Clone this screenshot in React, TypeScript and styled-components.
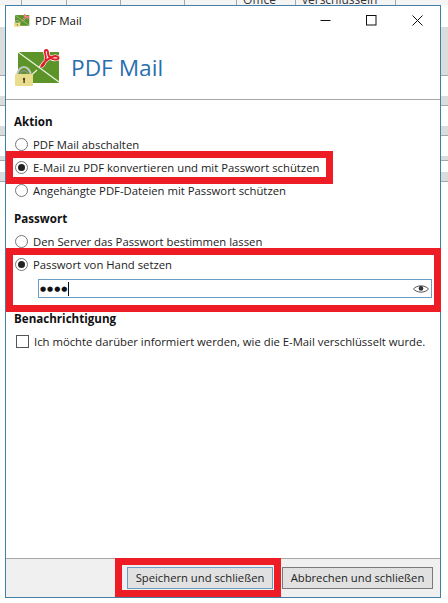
import styled, { createGlobalStyle } from 'styled-components'

const GlobalStyle = createGlobalStyle`
  html, body {
    margin: 0;
    padding: 0;
    background: #fff;
  }
  body {
    font-family: 'Open Sans', 'Liberation Sans', sans-serif;
    color: #222;
  }
`

const bands = [
  { height: 22, shaded: false },
  { height: 49, shaded: true },
  { height: 20, shaded: false },
  { height: 10, shaded: true },
  { height: 20, shaded: false },
  { height: 10, shaded: true },
  { height: 20, shaded: false },
  { height: 5, shaded: true },
  { height: 11, shaded: false },
  { height: 10, shaded: true },
]

const columns = [
  { width: 22 },
  { width: 45 },
  { width: 54 },
  { width: 64 },
  { width: 52 },
  { width: 59, text: 'Office' },
  { width: 100, text: 'verschlüsseln' },
]

function AppIcon({ size }: { size: number }): JSX.Element {
  return (
    <svg width={size} height={(size * 38) / 46} viewBox="0 0 46 38">
      <rect x="3" y="3" width="41" height="31" fill="#5c9429" />
      <path d="M3 3 L44 33 M24 18 L32 11 M8 34 L22 21" stroke="#eef4e0" strokeWidth="1.2" fill="none" />
      <path
        d="M26 18 C30 16 32 9 30 4 C29 0 33 0 33 4 C33 8 37 12 43 10 C45 8 41 6 37 8 C33 10 28 13 26 18"
        fill="none"
        stroke="#fff"
        strokeWidth="3.4"
      />
      <path
        d="M26 18 C30 16 32 9 30 4 C29 0 33 0 33 4 C33 8 37 12 43 10 C45 8 41 6 37 8 C33 10 28 13 26 18"
        fill="none"
        stroke="#e0202a"
        strokeWidth="2"
      />
      <path d="M2 27 C3 15 15 15 16 27" fill="none" stroke="#c4c8c0" strokeWidth="2" />
      <path d="M5 27 C6 20 12 20 13 27" fill="none" stroke="#8c9088" strokeWidth="1.5" />
      <rect x="0" y="25" width="18" height="12" rx="1" fill="#e9dc8c" />
      <rect x="8.4" y="30" width="1.4" height="4" fill="#4a4420" />
      <circle cx="9" cy="30" r="1.2" fill="#4a4420" />
    </svg>
  )
}

function App(): JSX.Element {
  return (
    <Page>
      <GlobalStyle />
      <Backdrop>
        <HeaderStrip>
          {columns.map((column, index) => (
            <HeaderCell key={index} style={{ width: column.width }}>
              {column.text}
            </HeaderCell>
          ))}
        </HeaderStrip>
        {bands.map((band, index) => (
          <Band key={index} $shaded={band.shaded} style={{ height: band.height }} />
        ))}
      </Backdrop>

      <Window>
        <TitleBar>
          <TitleLeft>
            <AppIcon size={16} />
            <TitleText>PDF Mail</TitleText>
          </TitleLeft>
          <WindowButtons>
            <WindowButton>
              <svg width="11" height="11" viewBox="0 0 11 11">
                <path d="M0.5 5.5 H10.5" stroke="#111" />
              </svg>
            </WindowButton>
            <WindowButton>
              <svg width="11" height="11" viewBox="0 0 11 11">
                <rect x="0.5" y="0.5" width="9.5" height="9.5" fill="none" stroke="#111" />
              </svg>
            </WindowButton>
            <WindowButton>
              <svg width="11" height="11" viewBox="0 0 11 11">
                <path d="M0.5 0.5 L10.5 10.5 M10.5 0.5 L0.5 10.5" stroke="#111" />
              </svg>
            </WindowButton>
          </WindowButtons>
        </TitleBar>

        <Banner>
          <AppIcon size={46} />
          <BannerTitle>PDF Mail</BannerTitle>
        </Banner>

        <Content>
          <SectionTitle>Aktion</SectionTitle>
          <OptionRow>
            <Radio />
            PDF Mail abschalten
          </OptionRow>
          <OptionRow>
            <Radio $checked />
            E-Mail zu PDF konvertieren und mit Passwort schützen
          </OptionRow>
          <OptionRow>
            <Radio />
            Angehängte PDF-Dateien mit Passwort schützen
          </OptionRow>

          <SectionTitle $spaced>Passwort</SectionTitle>
          <OptionRow>
            <Radio />
            Den Server das Passwort bestimmen lassen
          </OptionRow>
          <OptionRow>
            <Radio $checked />
            Passwort von Hand setzen
          </OptionRow>
          <PasswordField>
            <PasswordDots>●●●●</PasswordDots>
            <Caret />
            <EyeIcon width="16" height="10" viewBox="0 0 16 10">
              <path
                d="M0.5 5 C4 0.8 12 0.8 15.5 5 C12 9.2 4 9.2 0.5 5 Z"
                fill="none"
                stroke="#444"
                strokeWidth="0.9"
              />
              <circle cx="8" cy="4.4" r="2.3" fill="#333" />
            </EyeIcon>
          </PasswordField>

          <SectionTitle $spaced>Benachrichtigung</SectionTitle>
          <OptionRow>
            <Checkbox />
            Ich möchte darüber informiert werden, wie die E-Mail verschlüsselt wurde.
          </OptionRow>
        </Content>

        <Footer>
          <FooterButton $primary>Speichern und schließen</FooterButton>
          <FooterButton>Abbrechen und schließen</FooterButton>
        </Footer>
      </Window>

      <ActionMark />
      <PasswordMark />
      <SaveMark />
    </Page>
  )
}

export default App

const Page = styled.div`
  position: relative;
  width: 448px;
  height: 603px;
  padding: 5px 7px 5px 5px;
  box-sizing: border-box;
  overflow: hidden;
`

const Backdrop = styled.div`
  position: absolute;
  top: 0;
  left: 0;
  width: 100%;
`

const HeaderStrip = styled.div`
  display: flex;
  height: 5px;
  overflow: hidden;
  background: #f4f4f4;
`

const HeaderCell = styled.div`
  flex: none;
  box-sizing: border-box;
  height: 5px;
  padding-left: 6px;
  border-right: 1px solid #a8a8a8;
  font-size: 12px;
  line-height: 0;
  color: #333;
  white-space: nowrap;
`

const Band = styled.div<{ $shaded: boolean }>`
  box-sizing: border-box;
  background: ${({ $shaded }) => ($shaded ? '#dcdcdc' : '#fff')};
  border-bottom: ${({ $shaded }) => ($shaded ? '1px solid #a8a8a8' : 'none')};
`

const Window = styled.div`
  position: relative;
  display: flex;
  flex-direction: column;
  height: 593px;
  box-sizing: border-box;
  border: 1px solid #3f7fa8;
  background: #fff;
`

const TitleBar = styled.div`
  display: flex;
  align-items: center;
  justify-content: space-between;
  height: 29px;
  margin-bottom: 1px;
  padding-left: 8px;
`

const TitleLeft = styled.div`
  display: flex;
  align-items: center;
  gap: 5px;
`

const TitleText = styled.span`
  font-size: 11.5px;
  color: #111;
`

const WindowButtons = styled.div`
  display: flex;
`

const WindowButton = styled.div`
  display: flex;
  align-items: center;
  justify-content: center;
  width: 46px;
  height: 29px;
`

const Banner = styled.div`
  display: flex;
  align-items: center;
  gap: 10px;
  height: 64px;
  padding-left: 9px;
  box-sizing: border-box;
  border-bottom: 1px solid #a6a6a6;
`

const BannerTitle = styled.h1`
  margin: 0;
  font-size: 22.7px;
  font-weight: 400;
  color: #2a6fad;
`

const Content = styled.div`
  flex: 1;
  display: flex;
  flex-direction: column;
  padding: 11px 8px 0 8px;
`

const SectionTitle = styled.div<{ $spaced?: boolean }>`
  height: 22px;
  line-height: 22px;
  margin-top: ${({ $spaced }) => ($spaced ? '6px' : '0')};
  font-size: 11.6px;
  font-weight: 700;
  color: #111;
`

const OptionRow = styled.div`
  display: flex;
  align-items: center;
  gap: 5px;
  height: 23px;
  font-size: 11.3px;
  color: #222;
  white-space: nowrap;
`

const Radio = styled.span<{ $checked?: boolean }>`
  flex: none;
  display: flex;
  align-items: center;
  justify-content: center;
  width: 13px;
  height: 13px;
  margin-left: 1px;
  box-sizing: border-box;
  border: 1px solid #777;
  border-radius: 50%;

  &::after {
    content: '';
    display: ${({ $checked }) => ($checked ? 'block' : 'none')};
    width: 7px;
    height: 7px;
    border-radius: 50%;
    background: #222;
  }
`

const Checkbox = styled.span`
  flex: none;
  width: 13px;
  height: 13px;
  margin-left: 2px;
  box-sizing: border-box;
  border: 1px solid #555;
`

const PasswordField = styled.div`
  display: flex;
  align-items: center;
  height: 19px;
  margin: 3px 0 4px 24px;
  padding: 0 2px 0 1px;
  box-sizing: border-box;
  border: 1px solid #6a9cc4;
`

const PasswordDots = styled.span`
  font-family: 'DejaVu Sans', sans-serif;
  font-size: 7px;
  letter-spacing: 1px;
  color: #111;
`

const Caret = styled.span`
  width: 1px;
  height: 14px;
  background: #111;
`

const EyeIcon = styled.svg`
  margin-left: auto;
`

const Footer = styled.div`
  display: flex;
  justify-content: flex-end;
  align-items: center;
  gap: 9px;
  height: 39px;
  padding-right: 7px;
  box-sizing: border-box;
  border-top: 1px solid #a6a6a6;
  background: #f0f0f0;
`

const FooterButton = styled.div<{ $primary?: boolean }>`
  display: flex;
  align-items: center;
  justify-content: center;
  width: ${({ $primary }) => ($primary ? '146px' : '151px')};
  height: 22px;
  padding-bottom: 1px;
  box-sizing: border-box;
  border: 1px solid ${({ $primary }) => ($primary ? '#6a9cc4' : '#7a7a7a')};
  background: #e1e1e1;
  font-size: 11.25px;
  color: #222;
  white-space: nowrap;
`

const Mark = styled.div`
  position: absolute;
  box-sizing: border-box;
  border: 7px solid #ee1c25;
  pointer-events: none;
`

const ActionMark = styled(Mark)`
  left: 6px;
  top: 151px;
  width: 327px;
  height: 33px;
`

const PasswordMark = styled(Mark)`
  left: 6px;
  top: 248px;
  width: 435px;
  height: 64px;
`

const SaveMark = styled(Mark)`
  left: 115px;
  top: 558px;
  width: 166px;
  height: 39px;
`
